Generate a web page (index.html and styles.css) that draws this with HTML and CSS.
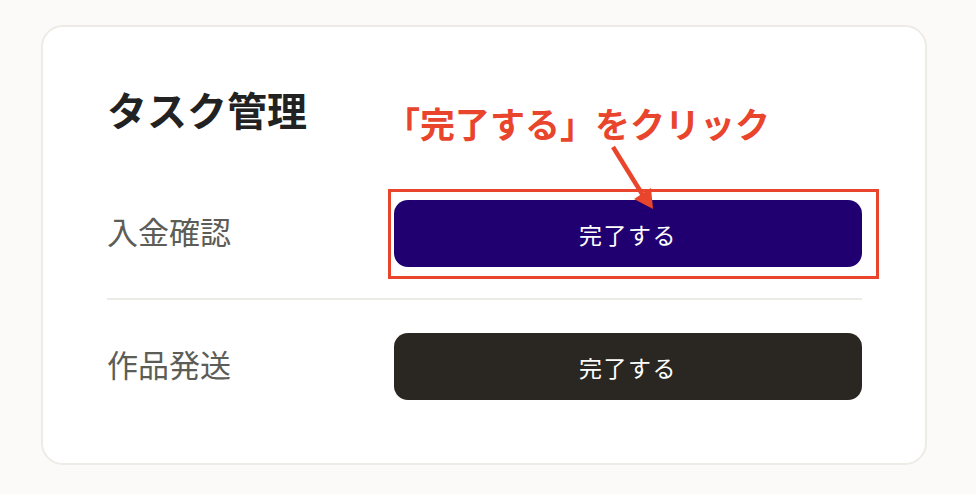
FILE: index.html
```html
<!DOCTYPE html>
<html lang="ja">
<head>
<meta charset="utf-8">
<link rel="stylesheet" href="styles.css">
</head>
<body>
<div class="card">
  <h1 class="title">タスク管理</h1>
  <div class="row">
    <span class="label">入金確認</span>
    <button class="btn btn-active">完了する</button>
  </div>
  <div class="divider"></div>
  <div class="row">
    <span class="label">作品発送</span>
    <button class="btn btn-dark">完了する</button>
  </div>
  <div class="note">「完了する」をクリック</div>
  <div class="highlight"></div>
  <svg class="arrow" width="70" height="80" viewBox="0 0 70 80">
    <line x1="13" y1="7" x2="44" y2="57" stroke="#e8452c" stroke-width="4.5"/>
    <polygon points="53,69 34,59 51,48" fill="#e8452c"/>
  </svg>
</div>
</body>
</html>
```

FILE: styles.css
```css
* { box-sizing: border-box; }
html, body { margin: 0; padding: 0; }
body {
  background: #fbfaf8;
  width: 976px;
  height: 494px;
  padding: 25px 0 0 41px;
  font-family: "Noto Sans CJK JP", "Noto Sans", sans-serif;
}
.card {
  position: relative;
  width: 886px;
  height: 440px;
  background: #ffffff;
  border: 2px solid #ecebe6;
  border-radius: 22px;
  padding: 58px 63px 0 64px;
}
.title {
  margin: 0 0 67px 0;
  font-size: 40px;
  line-height: 48px;
  font-weight: 700;
  color: #222222;
  letter-spacing: 0;
}
.row {
  display: grid;
  grid-template-columns: 287px 468px;
  align-items: center;
  height: 67px;
}
.label {
  font-size: 31px;
  line-height: 40px;
  color: #5d5d58;
  font-weight: 400;
  margin-bottom: 5px;
}
.btn {
  height: 67px;
  width: 468px;
  border: none;
  border-radius: 14px;
  color: #ffffff;
  font-family: "Noto Sans CJK JP", sans-serif;
  font-size: 23px;
  font-weight: 400;
  letter-spacing: 1.5px;
  padding: 0;
}
.btn-active { background: #200070; }
.btn-dark { background: #2a2722; }
.divider {
  height: 2px;
  background: #ecebe6;
  margin: 31px 0 33px 0;
}
.note {
  position: absolute;
  left: 342px;
  top: 76px;
  font-size: 35px;
  line-height: 40px;
  font-weight: 700;
  color: #e8452c;
  white-space: nowrap;
}
.highlight {
  position: absolute;
  left: 345px;
  top: 162px;
  width: 491px;
  height: 90px;
  border: 3px solid #e8452c;
}
.arrow {
  position: absolute;
  left: 557px;
  top: 113px;
}
```
